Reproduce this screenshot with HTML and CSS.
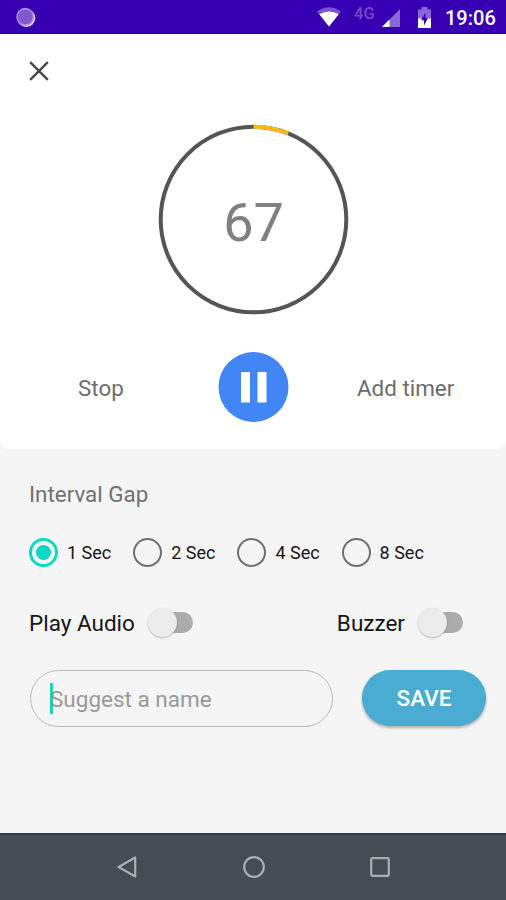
FILE: index.html
```html
<!DOCTYPE html>
<html lang="en">
<head>
<meta charset="utf-8">
<title>Timer</title>
<link rel="stylesheet" href="styles.css">
</head>
<body>
<div class="screen">
  <header class="status">
    <svg class="status-dot" width="22" height="22" viewBox="0 0 22 22"><circle cx="11.3" cy="11" r="9" fill="#e6dcf7"/><circle cx="10.2" cy="9.800" r="9" fill="#ab8de0"/><circle cx="10.2" cy="9.800" r="7.4" fill="#8058cf"/></svg>
    <svg class="wifi" width="24" height="20" viewBox="0 0 24 20"><path d="M0 4.5Q12-4 24 4.500L12 19.500Z" fill="#7b52cf"/><path d="M2.300 7.300Q12 1.500 21.700 7.300L12 19.500Z" fill="#fff"/></svg>
    <span class="network">4G</span>
    <svg class="signal" width="18" height="18" viewBox="0 0 18 18"><path d="M18 0V18H0Z" fill="#8a67d4"/><path d="M7.500 10.500V18H0Z" fill="#fff"/></svg>
    <svg class="battery" width="13" height="22" viewBox="0 0 13 22"><path d="M3.500 0h6v2.500H13V12H0V2.500h3.500Z" fill="#8a67d4"/><path d="M0 11.500h13V21H0Z" fill="#fff"/><path d="M7.500 5.500L3 13.200h3V18.500L10 11H7.500Z" fill="#3700b3"/></svg>
    <span class="clock">19:06</span>
  </header>
  <main class="timer">
    <div class="toolbar"><svg width="20" height="20" viewBox="0 0 20 20"><path d="M1.200 1.200L18.800 18.800M18.800 1.200L1.200 18.800" stroke="#484848" stroke-width="2.400" fill="none"/></svg></div>
    <div class="dial">
      <svg class="ring" width="191" height="191" viewBox="0 0 191 191" fill="none" stroke-width="4"><circle cx="95.500" cy="95.500" r="92.800" stroke="#555"/><path d="M95.500 2.700A92.800 92.800 0 0 1 130.300 9.460" stroke="#fbb914"/></svg>
      <span class="count">67</span>
    </div>
    <div class="controls">
      <span class="stop">Stop</span>
      <svg class="pause" width="71" height="71" viewBox="0 0 71 71"><circle cx="35.500" cy="35" r="35" fill="#4285f4"/><path d="M23 20h9v30.500h-9zM39.500 20h9v30.500h-9z" fill="#fff"/></svg>
      <span class="add">Add timer</span>
    </div>
  </main>
  <section class="settings">
    <h2 class="heading">Interval Gap</h2>
    <div class="radios">
      <span class="radio checked"><i></i>1 Sec</span>
      <span class="radio"><i></i>2 Sec</span>
      <span class="radio"><i></i>4 Sec</span>
      <span class="radio"><i></i>8 Sec</span>
    </div>
    <div class="switches">
      <span class="option"><span class="label">Play Audio</span><i class="switch"></i></span>
      <span class="option"><span class="label">Buzzer</span><i class="switch"></i></span>
    </div>
    <div class="form">
      <div class="field"><i class="caret"></i><span>Suggest a name</span></div>
      <div class="save">SAVE</div>
    </div>
  </section>
  <nav class="nav">
    <svg width="22" height="24" viewBox="0 0 22 24"><path d="M19.200 2.500V21.500L2.600 12Z"/></svg>
    <svg width="24" height="24" viewBox="0 0 24 24"><circle cx="12" cy="12" r="9.800"/></svg>
    <svg width="22" height="24" viewBox="0 0 22 24"><rect x="2.200" y="3.200" width="17.600" height="17.600" rx="1"/></svg>
  </nav>
</div>
</body>
</html>
```
FILE: styles.css
```css
* { box-sizing: border-box; }
body { margin: 0; font-family: Roboto, sans-serif; }
svg { display: block; flex: none; }
.screen { width: 506px; height: 900px; display: flex; flex-direction: column; background: #f5f5f5; overflow: hidden; white-space: nowrap; }

.status { height: 34px; flex: none; display: flex; align-items: flex-start; background: #3700b3; border-bottom: 1px solid #2b0099; color: #fff; }
.status-dot { margin: 7px 0 0 15px; }
.wifi { margin: 7px 0 0 280px; }
.network { width: 22px; margin: 5px 0 0 13px; font-size: 16.5px; line-height: 18px; font-weight: 500; color: #7549ca; }
.signal { margin: 9px 0 0 6px; }
.battery { margin: 7px 0 0 18px; }
.clock { margin: 5px 0 0 14px; font-size: 20px; line-height: 26px; font-weight: 500; }

.timer { height: 415px; flex: none; background: #fff; border-radius: 0 0 9px 9px; }
.toolbar { height: 90px; padding: 27px 0 0 29px; }
.dial { display: grid; place-items: center; height: 191px; }
.ring, .count { grid-area: 1 / 1; }
.count { font-size: 54px; line-height: 60px; color: #808080; margin: 7px 0 0 1px; }
.controls { display: grid; grid-template-columns: 218px 71px 217px; align-items: center; margin-top: 37px; font-size: 22.4px; line-height: 28px; color: #6c6c6c; }
.stop { padding-left: 78px; }
.add { padding-left: 68px; }

.settings { flex: 1; padding: 31px 20px 0 29px; }
.heading { margin: 0; font-size: 22.4px; line-height: 28px; font-weight: 400; color: #707070; }
.radios { display: flex; height: 28px; margin-top: 30px; }
.radio { width: 104.2px; display: flex; align-items: center; gap: 9px; font-size: 18px; color: #151515; }
.radio i { width: 29px; height: 29px; border: 2.6px solid #707070; border-radius: 50%; display: grid; place-items: center; }
.checked i { border-color: #0bd8c6; border-width: 3px; }
.checked i::after { content: ""; width: 15px; height: 15px; border-radius: 50%; background: #0bd8c6; }
.switches { display: flex; justify-content: space-between; margin-top: 41px; padding-right: 23px; height: 30px; }
.option { display: flex; align-items: center; gap: 13px; font-size: 22.5px; color: #151515; }
.label { padding-top: 1px; }
.switch { width: 45px; height: 30px; display: grid; align-items: center; }
.switch::before, .switch::after { content: ""; grid-area: 1 / 1; }
.switch::before { width: 34px; height: 21px; justify-self: end; border-radius: 11px; background: #acacac; }
.switch::after { width: 29px; height: 29px; border-radius: 50%; background: #ececec; box-shadow: 0 1px 2px rgba(0,0,0,.25); }
.form { display: flex; justify-content: space-between; margin-top: 33px; }
.field { width: 303px; height: 57px; margin: 0 0 0 1px; display: flex; align-items: center; padding-left: 19px; border: 1.5px solid #b9b9b9; border-radius: 29px; font-size: 22.5px; color: #999; }
.caret { width: 3px; height: 31px; margin-right: -3px; background: #16d4bd; }
.save { width: 124px; height: 56px; border-radius: 28px; background: #4aabd3; color: #fff; font-size: 22.5px; line-height: 57px; font-weight: 500; text-align: center; box-shadow: 0 2px 3px rgba(0,0,0,.3); }

.nav { height: 67px; flex: none; display: flex; justify-content: space-between; padding: 20px 115px 0 116px; background: #454d52; border-top: 2px solid #343a3f; }
.nav svg { fill: none; stroke: #a9b0b2; stroke-width: 2.2; stroke-linejoin: round; }
```
